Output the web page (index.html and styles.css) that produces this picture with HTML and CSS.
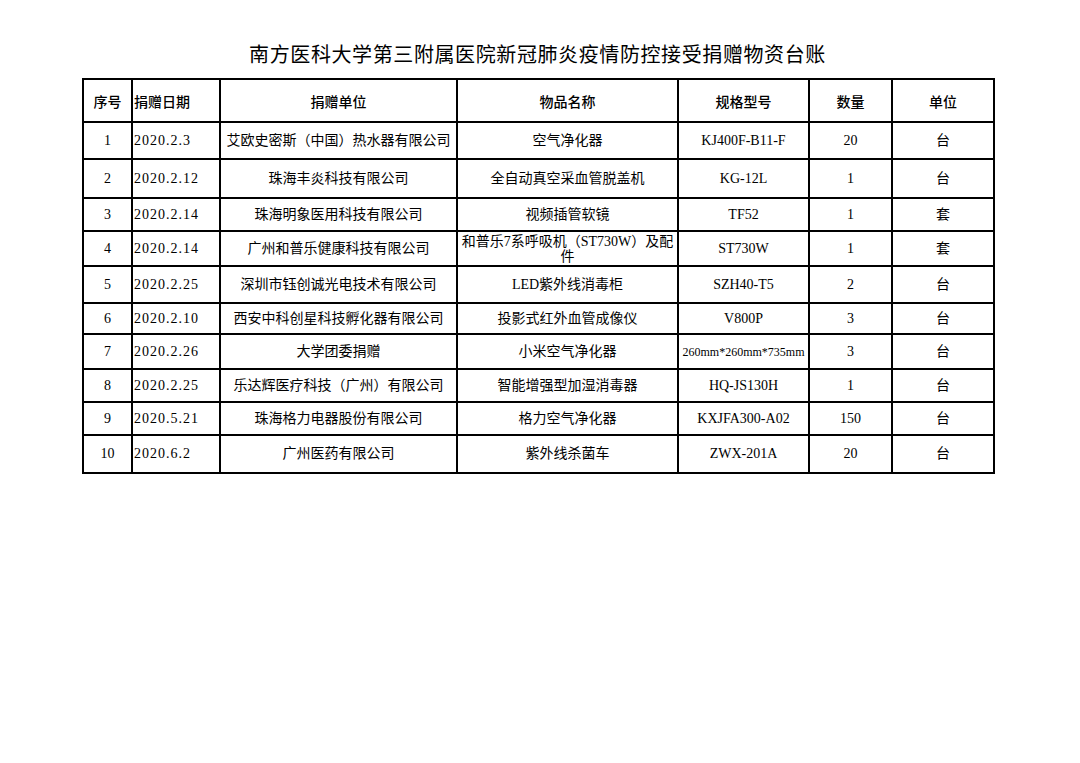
FILE: index.html
```html
<!DOCTYPE html>
<html lang="zh-CN">
<head>
<meta charset="utf-8">
<title>南方医科大学第三附属医院新冠肺炎疫情防控接受捐赠物资台账</title>
<link rel="stylesheet" href="styles.css">
</head>
<body>
<div class="page">
  <h1 class="title">南方医科大学第三附属医院新冠肺炎疫情防控接受捐赠物资台账</h1>
  <table class="ledger">
    <colgroup>
      <col class="c-no"><col class="c-date"><col class="c-donor"><col class="c-item"><col class="c-spec"><col class="c-qty"><col class="c-unit">
    </colgroup>
    <thead>
      <tr class="h43">
        <th>序号</th><th class="left">捐赠日期</th><th>捐赠单位</th><th>物品名称</th><th>规格型号</th><th>数量</th><th>单位</th>
      </tr>
    </thead>
    <tbody>
      <tr class="h37"><td>1</td><td class="left date">2020.2.3</td><td>艾欧史密斯（中国）热水器有限公司</td><td>空气净化器</td><td>KJ400F-B11-F</td><td>20</td><td>台</td></tr>
      <tr class="h39"><td>2</td><td class="left date">2020.2.12</td><td>珠海丰炎科技有限公司</td><td>全自动真空采血管脱盖机</td><td>KG-12L</td><td>1</td><td>台</td></tr>
      <tr class="h33"><td>3</td><td class="left date">2020.2.14</td><td>珠海明象医用科技有限公司</td><td>视频插管软镜</td><td>TF52</td><td>1</td><td>套</td></tr>
      <tr class="h35"><td>4</td><td class="left date">2020.2.14</td><td>广州和普乐健康科技有限公司</td><td class="wrap">和普乐7系呼吸机（ST730W）及配<br>件</td><td>ST730W</td><td>1</td><td>套</td></tr>
      <tr class="h37"><td>5</td><td class="left date">2020.2.25</td><td>深圳市钰创诚光电技术有限公司</td><td>LED紫外线消毒柜</td><td>SZH40-T5</td><td>2</td><td>台</td></tr>
      <tr class="h31"><td>6</td><td class="left date">2020.2.10</td><td>西安中科创星科技孵化器有限公司</td><td>投影式红外血管成像仪</td><td>V800P</td><td>3</td><td>台</td></tr>
      <tr class="h35"><td>7</td><td class="left date">2020.2.26</td><td>大学团委捐赠</td><td>小米空气净化器</td><td class="tight">260mm*260mm*735mm</td><td>3</td><td>台</td></tr>
      <tr class="h33"><td>8</td><td class="left date">2020.2.25</td><td>乐达辉医疗科技（广州）有限公司</td><td>智能增强型加湿消毒器</td><td>HQ-JS130H</td><td>1</td><td>台</td></tr>
      <tr class="h33"><td>9</td><td class="left date">2020.5.21</td><td>珠海格力电器股份有限公司</td><td>格力空气净化器</td><td>KXJFA300-A02</td><td>150</td><td>台</td></tr>
      <tr class="h38"><td>10</td><td class="left date">2020.6.2</td><td>广州医药有限公司</td><td>紫外线杀菌车</td><td>ZWX-201A</td><td>20</td><td>台</td></tr>
    </tbody>
  </table>
</div>
</body>
</html>
```
FILE: styles.css
```css
html, body {
  margin: 0;
  padding: 0;
  background: #ffffff;
  color: #000000;
}

.page {
  padding: 40px 0 0 82px;
  width: 911px;
}

.title {
  margin: 0 0 10px 0;
  height: 28px;
  line-height: 28px;
  font-family: "Noto Sans CJK SC", sans-serif;
  font-size: 20px;
  font-weight: 400;
  text-align: center;
  letter-spacing: 0.6px;
}

.ledger {
  width: 911px;
  border-collapse: collapse;
  table-layout: fixed;
  font-family: "Liberation Serif", "Noto Sans CJK SC", serif;
  font-size: 14px;
}

.c-no { width: 49px; }
.c-date { width: 88px; }
.c-donor { width: 237px; }
.c-item { width: 221px; }
.c-spec { width: 131px; }
.c-qty { width: 83px; }
.c-unit { width: 102px; }

.ledger th,
.ledger td {
  border: 2px solid #000;
  padding: 0 3px;
  text-align: center;
  vertical-align: middle;
  white-space: nowrap;
  line-height: 16px;
}

.ledger th {
  font-family: "Noto Sans CJK SC", sans-serif;
  font-weight: 500;
  font-size: 14px;
}

.ledger .left {
  text-align: left;
  padding-left: 1px;
}

.ledger .date {
  letter-spacing: 1px;
}

.ledger .wrap {
  line-height: 15px;
}

.ledger .tight {
  font-size: 12px;
  padding: 0;
}

.h31 { height: 31px; }
.h33 { height: 33px; }
.h35 { height: 35px; }
.h37 { height: 37px; }
.h38 { height: 38px; }
.h39 { height: 39px; }
.h43 { height: 43px; }
```
